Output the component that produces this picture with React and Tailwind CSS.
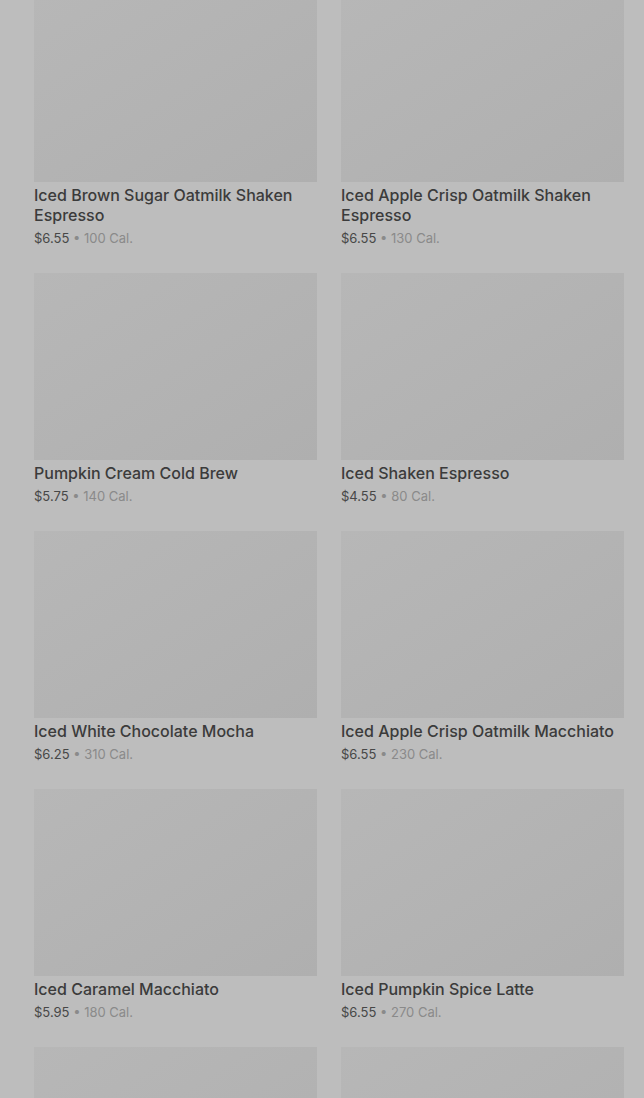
const drinks = [
  { name: 'Iced Brown Sugar Oatmilk Shaken Espresso', price: '$6.55', cal: '100 Cal.' },
  { name: 'Iced Apple Crisp Oatmilk Shaken Espresso', price: '$6.55', cal: '130 Cal.' },
  { name: 'Pumpkin Cream Cold Brew', price: '$5.75', cal: '140 Cal.' },
  { name: 'Iced Shaken Espresso', price: '$4.55', cal: '80 Cal.' },
  { name: 'Iced White Chocolate Mocha', price: '$6.25', cal: '310 Cal.' },
  { name: 'Iced Apple Crisp Oatmilk Macchiato', price: '$6.55', cal: '230 Cal.' },
  { name: 'Iced Caramel Macchiato', price: '$5.95', cal: '180 Cal.' },
  { name: 'Iced Pumpkin Spice Latte', price: '$6.55', cal: '270 Cal.' },
];

function DrinkImage() {
  return <div className="h-[187px] w-full bg-gradient-to-br from-[#b7b7b7] via-[#b3b3b3] to-[#afafaf]" />;
}

function DrinkCard({ drink }) {
  return (
    <div className="flex flex-col">
      <DrinkImage />
      <p className="mt-[3px] text-[16px] leading-[20px] font-medium text-[#3b3b3b]">{drink.name}</p>
      <p className="mt-[3px] text-[13px] leading-[20px] text-[#474747]">
        {drink.price}
        <span className="text-[#8a8a8a]"> • {drink.cal}</span>
      </p>
    </div>
  );
}

export default function App() {
  return (
    <div className="h-[1098px] w-full overflow-hidden bg-[#bdbdbd]" style={{ fontFamily: 'Inter, "Noto Sans", sans-serif' }}>
      <div className="-mt-[5px] grid grid-cols-2 gap-x-6 gap-y-[25px] pl-[34px] pr-[20px]">
        {drinks.map((d) => (
          <DrinkCard key={d.name} drink={d} />
        ))}
        {/* next row, only the top of the images is on screen */}
        <DrinkImage />
        <DrinkImage />
      </div>
    </div>
  );
}
